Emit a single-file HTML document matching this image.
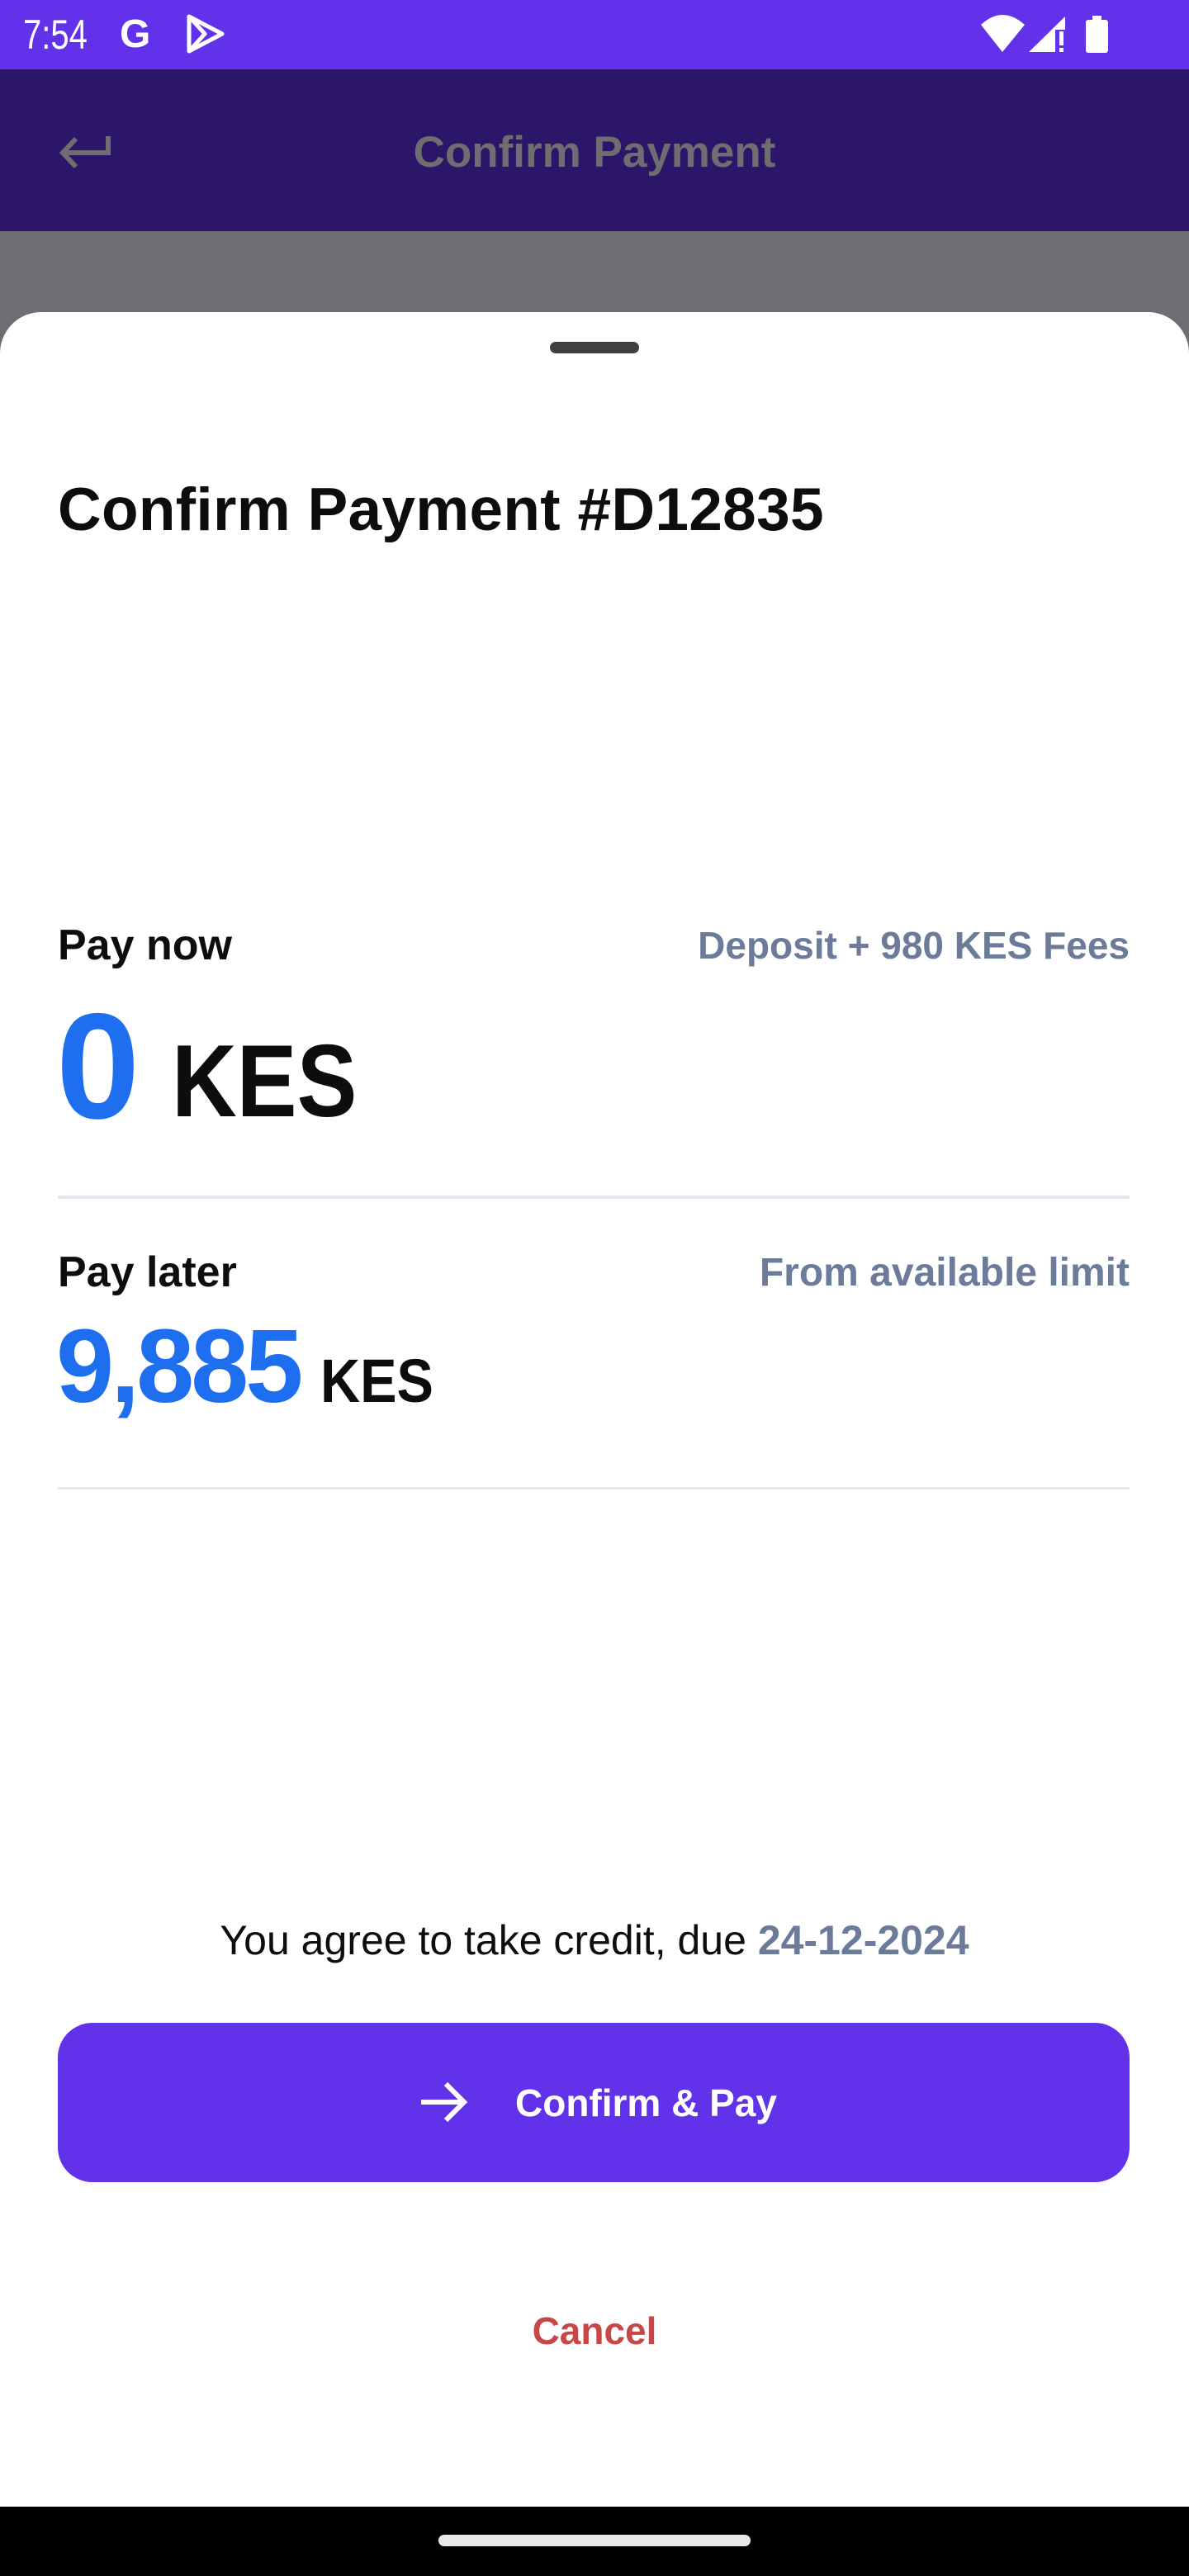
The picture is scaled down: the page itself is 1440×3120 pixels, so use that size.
<!DOCTYPE html>
<html><head><meta charset="utf-8"><style>
*{margin:0;padding:0;box-sizing:border-box}
body{width:1440px;height:3120px;position:relative;overflow:hidden;background:#fff;font-family:"Liberation Sans",sans-serif}
.a{position:absolute;white-space:nowrap;line-height:1}
</style></head><body>
<div class="a" style="left:0;top:0;width:1440px;height:84px;background:#6232EA"></div>
<div class="a" style="left:28px;top:17px;font-size:50px;color:#fff;transform:scaleX(.8);transform-origin:left">7:54</div>
<div class="a" style="left:145px;top:18px;font-size:48px;font-weight:bold;color:#fff">G</div>
<svg class="a" style="left:225px;top:16px" width="48" height="50" viewBox="0 0 48 50"><path d="M4 4 L4 46 L44 25 Z M4 4 L24 26 M4 46 L24 24" fill="none" stroke="#fff" stroke-width="5" stroke-linejoin="round"/></svg>
<svg class="a" style="left:1180px;top:0" width="260" height="84" viewBox="0 0 260 84"><path d="M8 30 Q34 6 61 30 L34 63 Z" fill="#fff"/><path d="M66 63 L110 20 L110 63 Z" fill="#fff"/><rect x="98" y="36" width="14" height="28" fill="#6232EA"/><rect x="103" y="38" width="5" height="17" fill="#fff"/><rect x="103" y="58" width="5" height="5" fill="#fff"/><rect x="135" y="24" width="27" height="40" rx="3" fill="#fff"/><rect x="143" y="19" width="11" height="6" fill="#fff"/></svg>
<div class="a" style="left:0;top:84px;width:1440px;height:196px;background:#2C1669"></div>
<svg class="a" style="left:68px;top:160px" width="70" height="50" viewBox="0 0 70 50"><path d="M63 5 L63 25 L8 25 M24 8 L8 25 L24 42" fill="none" stroke="#6E6E70" stroke-width="6"/></svg>
<div class="a" style="left:0;width:1440px;text-align:center;top:158px;font-size:53px;font-weight:bold;color:#6E6E70">Confirm Payment</div>
<div class="a" style="left:0;top:280px;width:1440px;height:160px;background:#6E6F72"></div>
<div class="a" style="left:0;top:378px;width:1440px;height:2660px;background:#fff;border-radius:50px 50px 0 0"></div>
<div class="a" style="left:666px;top:414px;width:108px;height:14px;border-radius:7px;background:#404040"></div>
<div class="a" style="left:70px;top:581px;font-size:73px;font-weight:bold;color:#0d0d0d;letter-spacing:0.3px">Confirm Payment #D12835</div>
<div class="a" style="left:70px;top:1119px;font-size:52px;font-weight:bold;color:#0d0d0d">Pay now</div>
<div class="a" style="right:72px;top:1122px;font-size:46px;font-weight:bold;color:#6B7B99">Deposit + 980 KES Fees</div>
<div class="a" style="left:68px;top:1200px;font-size:182px;font-weight:bold;color:#1E6FF0">0</div>
<div class="a" style="left:208px;top:1248px;font-size:124px;font-weight:bold;color:#0d0d0d;transform:scaleX(.88);transform-origin:left">KES</div>
<div class="a" style="left:70px;top:1448px;width:1298px;height:4px;background:#E2E6EE"></div>
<div class="a" style="left:70px;top:1515px;font-size:52px;font-weight:bold;color:#0d0d0d">Pay later</div>
<div class="a" style="right:72px;top:1518px;font-size:48px;font-weight:bold;color:#6B7B99">From available limit</div>
<div class="a" style="left:68px;top:1592px;font-size:126px;font-weight:bold;color:#1E6FF0;letter-spacing:-4px">9,885</div>
<div class="a" style="left:388px;top:1636px;font-size:74px;font-weight:bold;color:#0d0d0d;transform:scaleX(.9);transform-origin:left">KES</div>
<div class="a" style="left:70px;top:1801px;width:1298px;height:3px;background:#E2E6EE"></div>
<div class="a" style="left:0;width:1440px;text-align:center;top:2325px;font-size:50px;color:#0d0d0d">You agree to take credit, due <b style="color:#6B7B99">24-12-2024</b></div>
<div class="a" style="left:70px;top:2450px;width:1298px;height:193px;border-radius:42px;background:#6232EA"></div>
<svg class="a" style="left:506px;top:2518px" width="62" height="56" viewBox="0 0 62 56"><path d="M4 28 L56 28 M34 6 L56 28 L34 50" fill="none" stroke="#fff" stroke-width="6"/></svg>
<div class="a" style="left:624px;top:2524px;font-size:46px;font-weight:bold;color:#fff">Confirm &amp; Pay</div>
<div class="a" style="left:0;width:1440px;text-align:center;top:2800px;font-size:46px;font-weight:bold;color:#C94646">Cancel</div>
<div class="a" style="left:0;top:3036px;width:1440px;height:84px;background:#000"></div>
<div class="a" style="left:531px;top:3070px;width:378px;height:14px;border-radius:7px;background:#E8E8E8"></div>
</body></html>
